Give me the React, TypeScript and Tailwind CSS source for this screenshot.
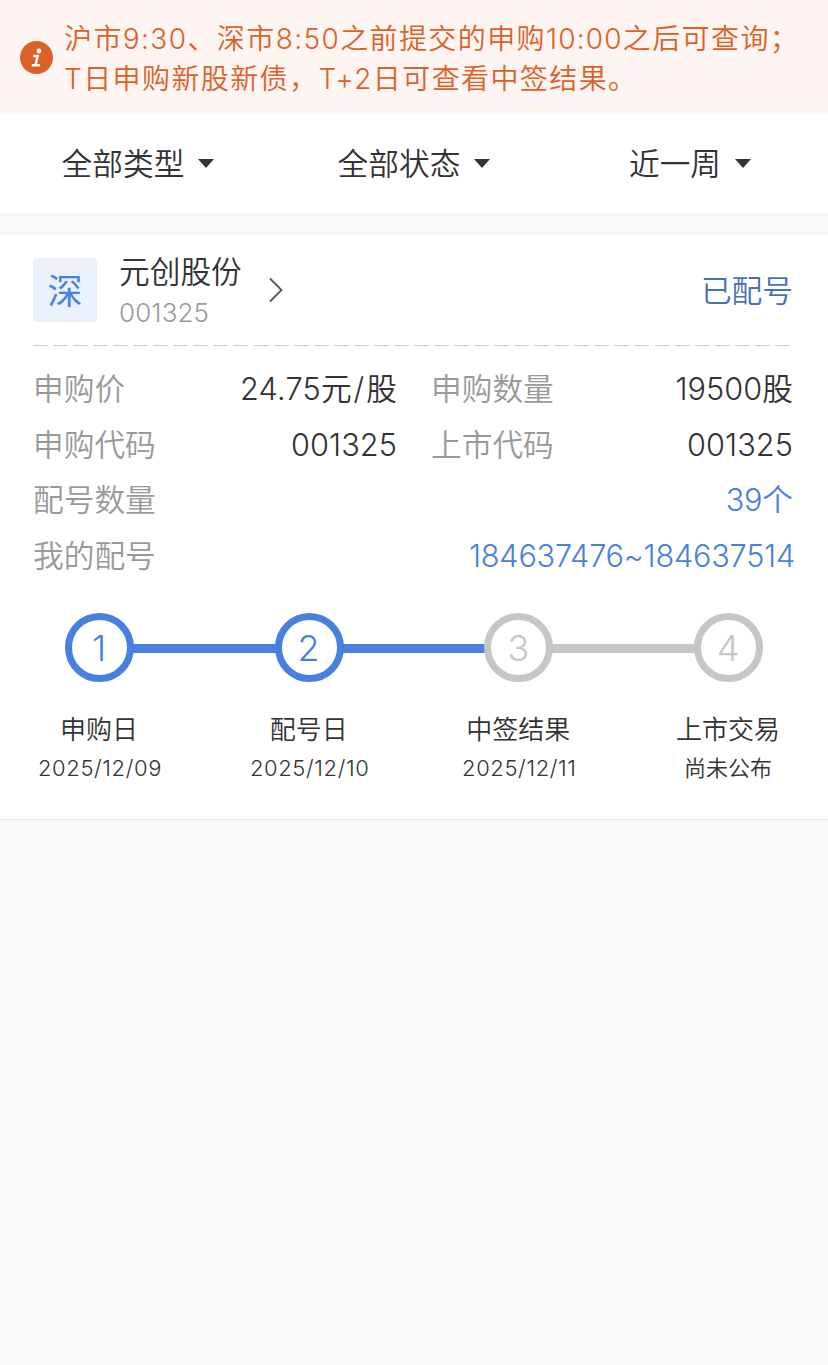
import React, { useState } from "react";

type Step = {
  no: number;
  title: string;
  date: string;
  done: boolean;
};

const filters = ["全部类型", "全部状态", "近一周"];

const steps: Step[] = [
  { no: 1, title: "申购日", date: "2025/12/09", done: true },
  { no: 2, title: "配号日", date: "2025/12/10", done: true },
  { no: 3, title: "中签结果", date: "2025/12/11", done: false },
  { no: 4, title: "上市交易", date: "尚未公布", done: false },
];

// Number part of a text, with its own letter spacing
function Num({ children, className = "tracking-[0.05px]" }: { children: React.ReactNode; className?: string }) {
  return <span className={className}>{children}</span>;
}

function InfoIcon() {
  return (
    <svg viewBox="0 0 33 33" className="w-[33px] h-[33px] shrink-0">
      <circle cx="16.5" cy="16.5" r="16.5" fill="#db6127" />
      <circle cx="18.9" cy="10" r="2.4" fill="#fff" />
      <path d="M13.2 15h4.4l-2 9M11.8 24.3h8.2" fill="none" stroke="#fff" strokeWidth="2.4" />
    </svg>
  );
}

function Notice() {
  return (
    <div className="h-[114px] flex items-center pl-5 bg-[#fef4f1] text-[#db6127] text-[28px] leading-[40px] tracking-[1.4px] whitespace-nowrap">
      <InfoIcon />
      <div className="ml-[11px] pt-[3px]">
        <p>
          沪市<Num className="tracking-[1.4px]">9:30</Num>、深市<Num className="tracking-[1.4px]">8:50</Num>
          之前提交的申购<Num className="tracking-[1.2px]">10:00</Num>之后可查询；
        </p>
        <p>T日申购新股新债，T+2日可查看中签结果。</p>
      </div>
    </div>
  );
}

function FilterBar() {
  const [active, setActive] = useState<number | null>(null);

  return (
    <div className="h-[99px] grid grid-cols-3 bg-white">
      {filters.map((name, i) => (
        <button
          key={name}
          onClick={() => setActive(active === i ? null : i)}
          className="flex items-center justify-center gap-[14px] text-[30.7px]"
        >
          <span className="pt-[2px]">{name}</span>
          <svg viewBox="0 0 16 9" className="w-4 h-[9px]">
            <path d="M0 0h16L8 9z" fill="#333" />
          </svg>
        </button>
      ))}
    </div>
  );
}

function Field({ label, children }: { label: string; children: React.ReactNode }) {
  return (
    <div className="flex justify-between whitespace-nowrap">
      <span className="text-[#999]">{label}</span>
      <span>{children}</span>
    </div>
  );
}

function Progress() {
  return (
    <div>
      <div className="flex items-center px-[65px]">
        {steps.map((step, i) => (
          <React.Fragment key={step.no}>
            {i > 0 && (
              <div className={`flex-1 h-[9px] -mx-px mt-[2px] ${steps[i - 1].done ? "bg-[#4880de]" : "bg-[#c6c6c6]"}`} />
            )}
            <div
              className={`w-[69px] h-[69px] shrink-0 rounded-full border-[7px] pr-px flex items-center justify-center text-[36px] leading-none ${
                step.done ? "border-[#4880de] text-[#4880de]" : "border-[#c6c6c6] text-[#c6c6c6]"
              }`}
            >
              {step.no}
            </div>
          </React.Fragment>
        ))}
      </div>
      <div className="flex justify-between pl-4 pr-[17px] mt-[28px] text-center">
        {steps.map((step) => (
          <div key={step.no} className="w-[166px]">
            <div className="text-[26px] leading-[40px]">{step.title}</div>
            <div className="text-[22px] leading-[37px]">
              {/\d/.test(step.date) ? <Num className="tracking-[0.6px] pl-[2px]">{step.date}</Num> : step.date}
            </div>
          </div>
        ))}
      </div>
    </div>
  );
}

function StockCard() {
  return (
    <div className="mt-[22px] h-[585px] bg-white border-b border-[#ebebeb]">
      <div className="h-[110px] pl-[33px] pr-[35px] flex items-center">
        <div className="w-16 h-16 rounded bg-[#eaf1fc] text-[#4880de] text-[35px] font-normal pt-[2px] flex items-center justify-center">
          深
        </div>
        <div className="ml-[22px] pt-[3px]">
          <div className="text-[30.7px] leading-[41px]">元创股份</div>
          <div className="text-[26px] leading-[41px] text-[#999] tracking-[0.1px]">001325</div>
        </div>
        <svg viewBox="0 0 14 26" className="ml-[27px] w-[14px] h-[26px]" fill="none" stroke="#555" strokeWidth="1.8">
          <path d="M1 1.5L12.5 13L1 24.5" />
        </svg>
        <div className="ml-auto pt-[2px] text-[30.7px] text-[#4a72b2]">已配号</div>
      </div>
      <div className="ml-[33px] w-[757px] h-px bg-[repeating-linear-gradient(to_right,#ccc_0_15px,transparent_15px_20.05px)]" />

      <div className="pl-[33px] pr-[35px] pt-[15px] text-[30.7px] leading-[55.6px]">
        <div className="grid grid-cols-[364px_362px] gap-x-[34px]">
          <Field label="申购价">
            <Num className="tracking-[0.2px]">24.75</Num>元<Num className="tracking-[2px] pl-[2px]">/</Num>股
          </Field>
          <Field label="申购数量">
            <Num>19500</Num>股
          </Field>
          <Field label="申购代码">
            <Num>001325</Num>
          </Field>
          <Field label="上市代码">
            <Num>001325</Num>
          </Field>
        </div>
        <Field label="配号数量">
          <span className="text-[#4880de]">
            <Num className="tracking-[-0.3px]">39</Num>个
          </span>
        </Field>
        <Field label="我的配号">
          <span className="text-[#4880de] -mr-[2px]">
            <Num className="tracking-[-0.25px]">184637476~184637514</Num>
          </span>
        </Field>
      </div>

      <div className="mt-[30px]">
        <Progress />
      </div>
    </div>
  );
}

export default function App() {
  return (
    <div className="min-h-screen bg-[#f7f8fa] text-[#333] font-[350] font-['Inter','Noto_Sans_CJK_SC',sans-serif]">
      <Notice />
      <FilterBar />
      <StockCard />
    </div>
  );
}
